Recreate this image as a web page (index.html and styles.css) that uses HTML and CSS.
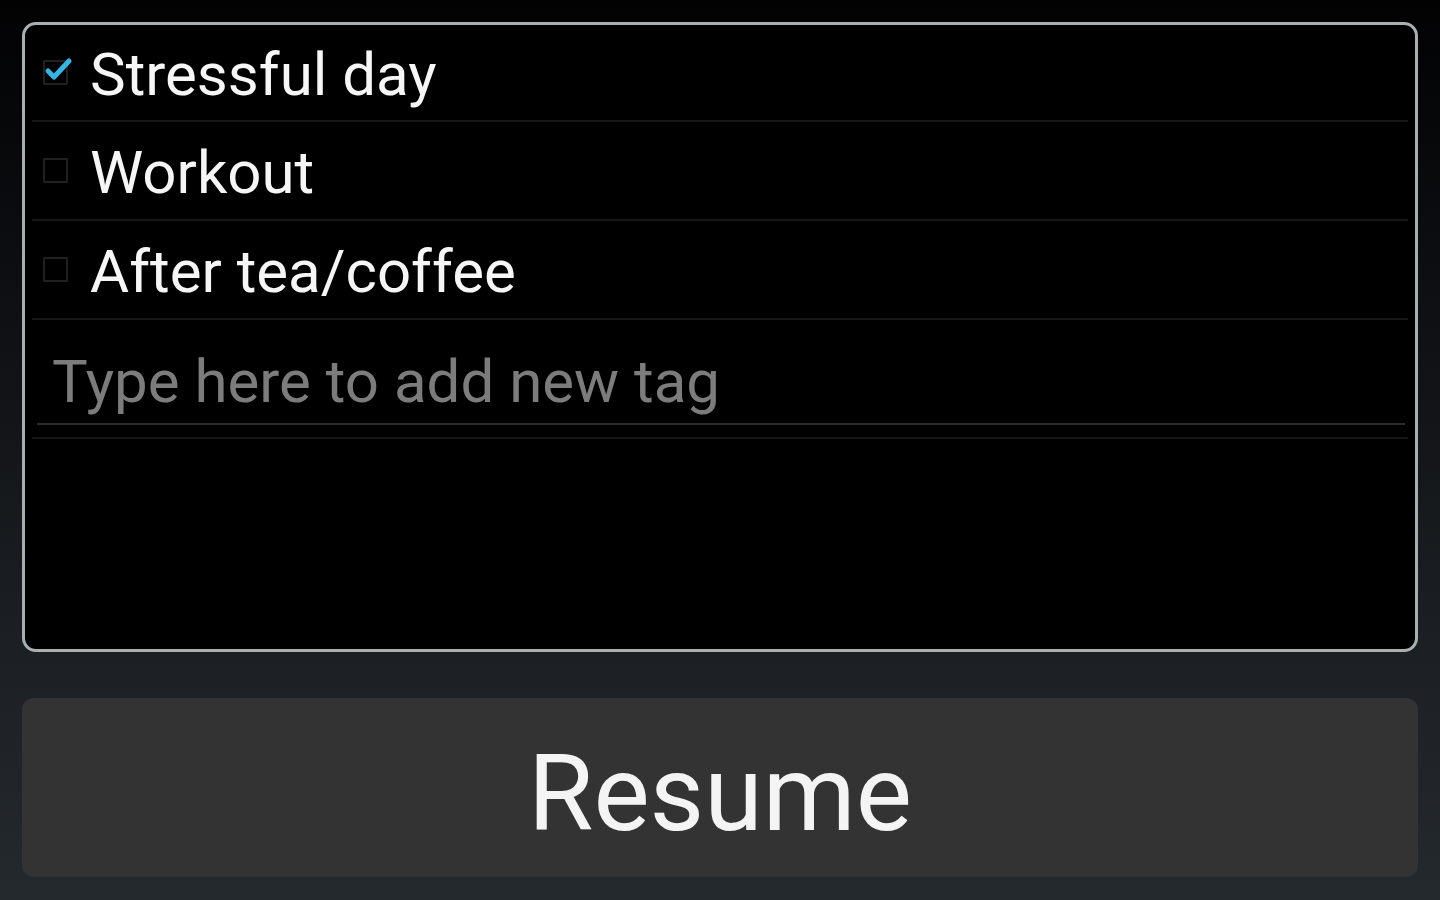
FILE: index.html
```html
<!DOCTYPE html>
<html>
    <head>
        <meta charset="UTF-8">
        <title>Tags</title>
        <link rel="stylesheet" href="styles.css">
    </head>
    <body>
        <div class="screen">
            <div class="tagPanel">
                <label class="tagRow">
                    <span class="check checked">
                        <svg viewBox="0 0 30 30" width="30" height="30">
                            <path d="M5 17 L11 23 L26 7" fill="none" stroke="#33b5e5"
                                  stroke-width="5" stroke-linecap="round" stroke-linejoin="round"/>
                        </svg>
                    </span>
                    <span class="tagName">Stressful day</span>
                </label>
                <label class="tagRow">
                    <span class="check"></span>
                    <span class="tagName">Workout</span>
                </label>
                <label class="tagRow">
                    <span class="check"></span>
                    <span class="tagName">After tea/coffee</span>
                </label>
                <div class="newTag">
                    <span class="hint">Type here to add new tag</span>
                </div>
            </div>
            <button class="resume">Resume</button>
        </div>
    </body>
</html>
```

FILE: styles.css
```css
* {
    box-sizing: border-box;
    font-family: Roboto, 'Liberation Sans', sans-serif; }

html, body {
    width: 100%; height: 100%;
    margin: 0; padding: 0; }
body {
    background: linear-gradient(180deg, #020203 0%, #0e1013 35%, #1d2125 75%, #24292d 100%);
    color: #fff; }

.screen {
    display: flex;
    flex-direction: column;
    gap: 46px;
    padding: 22px 22px 0 22px; }

.tagPanel {
    height: 630px;
    background: #000;
    border: 3px solid #a7afb1;
    border-radius: 14px;
    padding: 0 7px;
    display: flex;
    flex-direction: column; }

.tagRow {
    display: flex;
    align-items: center;
    gap: 22px;
    height: 99px;
    padding-left: 11px;
    border-bottom: 2px solid #161616; }
.tagRow:first-child { height: 97px; }

.check {
    position: relative;
    width: 25px; height: 25px;
    flex: none;
    border: 2px solid #202020;
    border-radius: 1px; }
.check svg {
    position: absolute;
    left: -2px; top: -8px; }

.tagName {
    font-size: 60px;
    line-height: 1;
    color: #f6f6f6;
    padding-top: 5px; }

.newTag {
    height: 119px;
    padding: 32px 3px 0 5px;
    border-bottom: 2px solid #161616; }
.hint {
    display: block;
    font-size: 60px;
    line-height: 1;
    color: #7c7c7c;
    padding: 0 0 11px 15px;
    border-bottom: 2px solid #2c2c2c; }

.resume {
    height: 179px;
    border: none;
    border-radius: 12px;
    background: #333;
    color: #f4f4f4;
    font-size: 106px;
    padding-top: 14px; }
```
